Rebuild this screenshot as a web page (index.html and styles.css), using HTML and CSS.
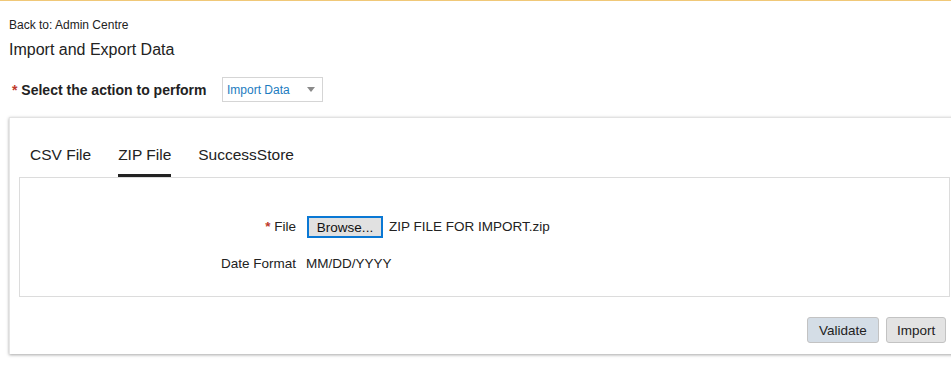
FILE: index.html
```html
<!DOCTYPE html>
<html>
<head>
<meta charset="utf-8">
<link rel="stylesheet" href="styles.css">
</head>
<body>
<div class="topline"></div>
<div class="page">
  <a class="back">Back to: Admin Centre</a>
  <h1 class="title">Import and Export Data</h1>
  <div class="action-row">
    <span class="action-label"><span class="req">*</span> Select the action to perform</span>
    <div class="select">
      <span class="select-text">Import Data</span>
      <svg class="caret" width="8" height="5" viewBox="0 0 8 5"><path d="M0 0H8L4 5Z" fill="#8a8a8a"/></svg>
    </div>
  </div>
  <div class="panel">
    <div class="tabs">
      <span class="tab">CSV File</span>
      <span class="tab active">ZIP File</span>
      <span class="tab">SuccessStore</span>
    </div>
    <div class="box">
      <div class="form">
        <div class="row">
          <span class="label"><span class="req">*</span> File</span>
          <span class="value"><button class="browse">Browse...</button><span class="fname">ZIP FILE FOR IMPORT.zip</span></span>
        </div>
        <div class="row">
          <span class="label">Date Format</span>
          <span class="value">MM/DD/YYYY</span>
        </div>
      </div>
    </div>
    <div class="actions">
      <button class="btn validate">Validate</button>
      <button class="btn">Import</button>
    </div>
  </div>
</div>
</body>
</html>
```

FILE: styles.css
```css
html, body {
  margin: 0;
  padding: 0;
  background: #fff;
  overflow: hidden;
}
body {
  font-family: "Liberation Sans", Arial, sans-serif;
  color: #222;
  width: 951px;
  height: 387px;
}
.topline {
  height: 1px;
  background: #f0c878;
}
.page {
  padding: 0 0 0 9px;
}
.back {
  display: block;
  margin-top: 17px;
  font-size: 12px;
  line-height: 14px;
  color: #222;
}
.title {
  margin: 8px 0 0 0;
  font-size: 16px;
  font-weight: normal;
  line-height: 20px;
  color: #222;
}
.action-row {
  display: flex;
  align-items: center;
  margin-top: 17px;
  margin-left: 3px;
  height: 25px;
}
.action-label {
  font-size: 14px;
  font-weight: bold;
  color: #222;
  width: 210px;
}
.req {
  color: #c0392b;
  font-weight: bold;
}
.select {
  box-sizing: border-box;
  width: 101px;
  height: 25px;
  border: 1px solid #d5d5d5;
  display: flex;
  align-items: center;
  justify-content: space-between;
  padding: 0 7px 0 4px;
}
.select-text {
  font-size: 12px;
  color: #1c7cc0;
}
.panel {
  margin-top: 15px;
  width: 960px;
  height: 237px;
  box-sizing: border-box;
  border-top: 1px solid #e2e2e2;
  border-left: 1px solid #e6e6e6;
  box-shadow: 0 1px 3px rgba(0,0,0,0.35);
  background: #fff;
  padding: 0 0 0 9px;
}
.tabs {
  display: flex;
  gap: 27px;
  padding-left: 11px;
  height: 59px;
  box-sizing: border-box;
  padding-top: 27px;
}
.tab {
  font-size: 15.5px;
  color: #222;
  height: 32px;
  box-sizing: border-box;
  line-height: 20px;
}
.active {
  border-bottom: 3px solid #222;
}
.box {
  width: 931px;
  height: 120px;
  box-sizing: border-box;
  border: 1px solid #dcdcdc;
  padding-top: 38px;
}
.form {
  display: grid;
  grid-template-columns: 286px auto;
  row-gap: 15px;
}
.row {
  display: contents;
}
.label {
  text-align: right;
  padding-right: 10px;
  font-size: 13.5px;
  color: #222;
  line-height: 22px;
}
.value {
  font-size: 13.5px;
  color: #222;
  line-height: 22px;
  display: flex;
  align-items: center;
}
.browse {
  box-sizing: border-box;
  height: 22px;
  width: 76px;
  border: 2px solid #0a78d4;
  background: #e1e1e1;
  font-family: "Liberation Sans", Arial, sans-serif;
  font-size: 13.5px;
  color: #111;
  padding: 0;
  margin-left: 1px;
  margin-right: 6px;
}
.actions {
  display: flex;
  justify-content: flex-start;
  gap: 7px;
  margin-top: 20px;
  padding-left: 788px;
}
.btn {
  box-sizing: border-box;
  height: 26px;
  padding: 0 10px;
  border: 1px solid #c3c3c3;
  border-radius: 3px;
  background: #e3e3e3;
  font-family: "Liberation Sans", Arial, sans-serif;
  font-size: 13.5px;
  color: #222;
}
.validate {
  background: #d4dde6;
  width: 72px;
}
```
